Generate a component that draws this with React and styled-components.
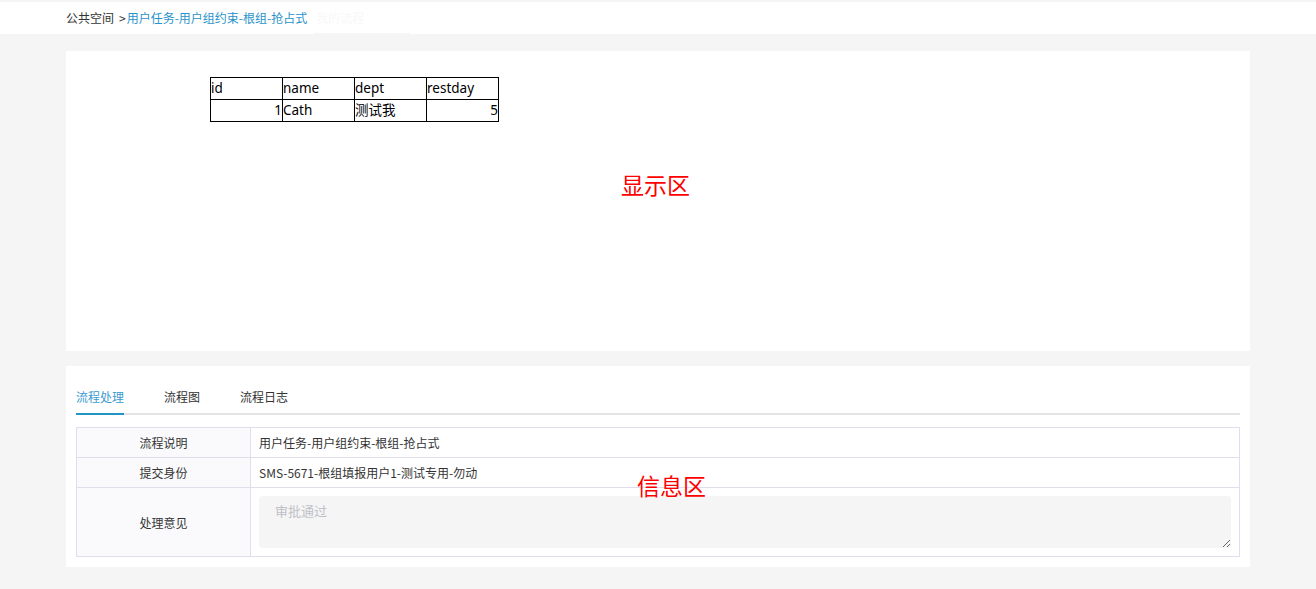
import React from "react";
import styled, { createGlobalStyle } from "styled-components";

const Global = createGlobalStyle`
  html, body { margin: 0; padding: 0; background: #f5f5f5; }
  body { font-family: "Noto Sans CJK SC", "Noto Sans", sans-serif; font-size: 12px; color: #333; }
`;

const Page = styled.div`
  padding-top: 2px;
  min-height: 587px;
  background: #f5f5f5;
`;

const Header = styled.header`
  height: 32px;
  background: #fff;
  display: flex;
  align-items: center;
  padding-left: 66px;
  font-size: 12px;
  line-height: 16px;
`;

const Crumb = styled.span`
  color: ${(p) => (p.$link ? "#2a93c9" : "#333")};
  margin-left: ${(p) => p.$ml || 0}px;
  white-space: nowrap;
`;

const Ghost = styled.span`
  margin-left: 7px;
  color: #f8f8f8;
  align-self: stretch;
  display: flex;
  align-items: center;
  padding: 0 2px;
  border-bottom: 1px solid #f5f5f5;
  width: 92px;
`;

const Card = styled.section`
  position: relative;
  background: #fff;
  margin: ${(p) => p.$mt}px 66px 0;
  height: ${(p) => p.$h}px;
  box-sizing: border-box;
  padding: ${(p) => p.$pad};
`;

const Annotation = styled.div`
  position: absolute;
  left: ${(p) => p.$x}px;
  top: ${(p) => p.$y}px;
  color: #ff0000;
  font-size: 23px;
  line-height: 26px;
  font-family: "Noto Sans CJK SC", sans-serif;
`;

const DataTable = styled.table`
  border-collapse: collapse;
  font-family: "Noto Sans", "Noto Sans CJK SC", sans-serif;
  font-size: 13.5px;
  color: #000;
`;

const DCell = styled.td`
  border: 1px solid #000;
  width: 71px;
  height: 21px;
  padding: 0;
  line-height: 21px;
  text-align: ${(p) => (p.$num ? "right" : "left")};
  vertical-align: middle;
`;

const Tabs = styled.div`
  display: flex;
  gap: 40px;
  border-bottom: 2px solid #e4e4e4;
`;

const Tab = styled.div`
  padding: 12px 0 8px;
  line-height: 17px;
  font-size: 12px;
  margin-bottom: -2px;
  border-bottom: 2px solid ${(p) => (p.$active ? "#2196c6" : "transparent")};
  color: ${(p) => (p.$active ? "#3a9bd0" : "#333")};
`;

const InfoTable = styled.div`
  margin-top: 12px;
  border: 1px solid #e1dded;
  display: grid;
  grid-template-columns: 174px 1fr;
`;

const Label = styled.div`
  box-sizing: border-box;
  background: #fafafc;
  border-right: 1px solid #e1dded;
  border-top: ${(p) => (p.$first ? "none" : "1px solid #e1dded")};
  height: ${(p) => p.$h}px;
  display: flex;
  align-items: center;
  justify-content: center;
  font-size: 12px;
  color: #333;
`;

const Value = styled.div`
  box-sizing: border-box;
  border-top: ${(p) => (p.$first ? "none" : "1px solid #e1dded")};
  height: ${(p) => p.$h}px;
  display: flex;
  align-items: center;
  padding: 0 8px;
  font-size: 12px;
  color: #333;
`;

const TextArea = styled.textarea`
  width: 100%;
  height: 52px;
  box-sizing: border-box;
  border: none;
  border-radius: 4px;
  background: #f5f5f5;
  padding: 5px 16px;
  font-family: "Noto Sans CJK SC", sans-serif;
  font-size: 13px;
  color: #333;
  outline: none;
  &::placeholder { color: #c0c0c8; }
`;

export default function App() {
  return (
    <>
      <Global />
      <Page>
        <Header>
          <Crumb>公共空间</Crumb>
          <Crumb $ml={5}>&gt;</Crumb>
          <Crumb $link $ml={1}>用户任务-用户组约束-根组-抢占式</Crumb>
          <Ghost>我的流程</Ghost>
        </Header>

        <Card $mt={17} $h={300} $pad="26px 0 0 144px">
          <DataTable>
            <tbody>
              <tr>
                <DCell>id</DCell>
                <DCell>name</DCell>
                <DCell>dept</DCell>
                <DCell>restday</DCell>
              </tr>
              <tr>
                <DCell $num>1</DCell>
                <DCell>Cath</DCell>
                <DCell>测试我</DCell>
                <DCell $num>5</DCell>
              </tr>
            </tbody>
          </DataTable>
          <Annotation $x={555} $y={120}>显示区</Annotation>
        </Card>

        <Card $mt={15} $h={201} $pad="10px 10px 10px">
          <Tabs>
            <Tab $active>流程处理</Tab>
            <Tab>流程图</Tab>
            <Tab>流程日志</Tab>
          </Tabs>
          <InfoTable>
            <Label $first $h={29}>流程说明</Label>
            <Value $first $h={29}>用户任务-用户组约束-根组-抢占式</Value>
            <Label $h={30}>提交身份</Label>
            <Value $h={30}>SMS-5671-根组填报用户1-测试专用-勿动</Value>
            <Label $h={69}>处理意见</Label>
            <Value $h={69}>
              <TextArea placeholder="审批通过" />
            </Value>
          </InfoTable>
          <Annotation $x={571} $y={106}>信息区</Annotation>
        </Card>
      </Page>
    </>
  );
}
